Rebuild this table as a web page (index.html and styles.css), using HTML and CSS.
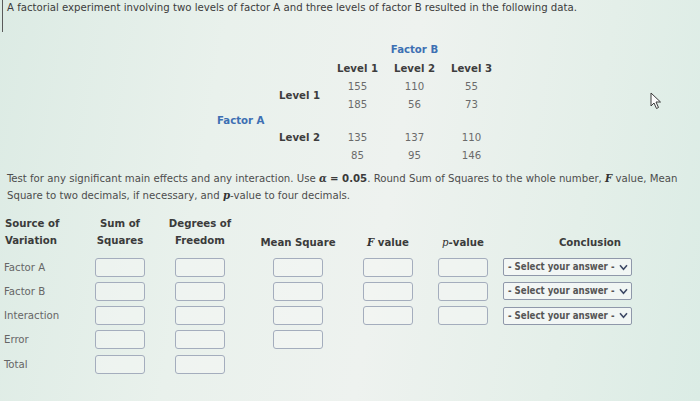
FILE: index.html
```html
<!DOCTYPE html>
<html>
<head>
<meta charset="utf-8">
<link rel="stylesheet" href="styles.css">
</head>
<body>
<div class="page">
  <div class="intro">A factorial experiment involving two levels of factor A and three levels of factor B resulted in the following data.</div>

  <div class="data">
    <div class="fb c-vals">Factor B</div>
    <div class="lvh c1">Level 1</div>
    <div class="lvh c2">Level 2</div>
    <div class="lvh c3">Level 3</div>

    <div class="lvl r-l1">Level 1</div>
    <div class="v c1 r3">155</div><div class="v c2 r3">110</div><div class="v c3 r3">55</div>
    <div class="v c1 r4">185</div><div class="v c2 r4">56</div><div class="v c3 r4">73</div>

    <div class="fa">Factor A</div>

    <div class="lvl r-l2">Level 2</div>
    <div class="v c1 r6">135</div><div class="v c2 r6">137</div><div class="v c3 r6">110</div>
    <div class="v c1 r7">85</div><div class="v c2 r7">95</div><div class="v c3 r7">146</div>
  </div>

  <p class="instr">Test for any significant main effects and any interaction. Use <b class="alpha">α</b> <b>= 0.05</b>. Round Sum of Squares to the whole number, <i class="mv">F</i> value, Mean Square to two decimals, if necessary, and <i class="mv">p</i>-value to four decimals.</p>

  <div class="anova">
    <div class="h h2 h-src">Source of<br>Variation</div>
    <div class="h h2">Sum of<br>Squares</div>
    <div class="h h2">Degrees of<br>Freedom</div>
    <div class="h">Mean Square</div>
    <div class="h"><i class="mv">F</i> value</div>
    <div class="h"><i class="mv pv">p</i>-value</div>
    <div class="h h-con">Conclusion</div>

    <div class="lab">Factor A</div>
    <div class="box"></div><div class="box"></div><div class="box"></div><div class="box"></div><div class="box"></div>
    <div class="sel"><span>- Select your answer -</span><svg viewBox="0 0 10 8" class="chev"><path d="M1 1.5 L5 6 L9 1.5" fill="none" stroke="#3e4a66" stroke-width="1.8"/></svg></div>

    <div class="lab">Factor B</div>
    <div class="box"></div><div class="box"></div><div class="box"></div><div class="box"></div><div class="box"></div>
    <div class="sel"><span>- Select your answer -</span><svg viewBox="0 0 10 8" class="chev"><path d="M1 1.5 L5 6 L9 1.5" fill="none" stroke="#3e4a66" stroke-width="1.8"/></svg></div>

    <div class="lab">Interaction</div>
    <div class="box"></div><div class="box"></div><div class="box"></div><div class="box"></div><div class="box"></div>
    <div class="sel"><span>- Select your answer -</span><svg viewBox="0 0 10 8" class="chev"><path d="M1 1.5 L5 6 L9 1.5" fill="none" stroke="#3e4a66" stroke-width="1.8"/></svg></div>

    <div class="lab">Error</div>
    <div class="box"></div><div class="box"></div><div class="box"></div>
    <div class="empty"></div><div class="empty"></div><div class="empty"></div>

    <div class="lab">Total</div>
    <div class="box"></div><div class="box"></div>
    <div class="empty"></div><div class="empty"></div><div class="empty"></div><div class="empty"></div>
  </div>

  <svg class="cursor" viewBox="0 0 12 18" width="12" height="18"><path d="M1 1 L1 14 L4 11 L6.5 16.5 L8.5 15.5 L6 10 L10.5 10 Z" fill="#fbfbfb" stroke="#3a3a3a" stroke-width="1"/></svg>
</div>
</body>
</html>
```

FILE: styles.css
```css
html, body {
  margin: 0;
  padding: 0;
}
body {
  width: 700px;
  height: 401px;
  overflow: hidden;
  font-family: "DejaVu Sans Condensed", "DejaVu Sans", sans-serif;
  font-stretch: condensed;
  font-size: 11.3px;
  color: #474747;
  background: linear-gradient(100deg, #dcebe4 0%, #e9f1ec 30%, #eef2ef 55%, #e4efe9 80%, #dbece5 100%);
}
.page {
  position: relative;
  height: 401px;
}
.intro {
  border-left: 1.5px solid #5a5a5a;
  margin-left: 2px;
  padding: 1px 0 0 4px;
  height: 31px;
  line-height: 13px;
  color: #3c3c3c;
}
.data {
  display: grid;
  grid-template-columns: 214px 52px 63px 57px 57px 57px;
  grid-template-rows: 18px 19px 18px 17px 16px 18px 18px;
  margin-top: 9px;
  line-height: 16px;
  align-items: center;
}
.fb {
  grid-row: 1;
  grid-column: 4 / 7;
  text-align: center;
  color: #3d6fb3;
  font-weight: bold;
}
.lvh {
  grid-row: 2;
  text-align: center;
  font-weight: bold;
  color: #3d3d3d;
}
.c1 { grid-column: 4; }
.c2 { grid-column: 5; }
.c3 { grid-column: 6; }
.r3 { grid-row: 3; }
.r4 { grid-row: 4; }
.r6 { grid-row: 6; }
.r7 { grid-row: 7; }
.v {
  text-align: center;
  color: #6a6a6a;
}
.lvl {
  grid-column: 3;
  text-align: right;
  padding-right: 9px;
  font-weight: bold;
  color: #3d3d3d;
}
.r-l1 { grid-row: 3 / 5; }
.r-l2 { grid-row: 6; }
.fa {
  grid-column: 2;
  grid-row: 5;
  font-weight: bold;
  color: #3d6fb3;
  padding-left: 3px;
}
.instr {
  margin: 5px 0 0 7px;
  line-height: 17px;
  color: #4d4d4d;
  width: 690px;
}
.instr b {
  color: #3a3a3a;
}
.alpha {
  font-family: "DejaVu Serif", serif;
  font-style: italic;
  color: #2d3e6a;
}
.mv {
  font-family: "DejaVu Serif", "Liberation Serif", serif;
  font-weight: bold;
  font-style: italic;
  color: #333;
}
.anova {
  display: grid;
  grid-template-columns: 90px 60px 100px 96px 84px 66px 188px;
  grid-template-rows: 41px repeat(5, 24.25px);
  margin-top: 10px;
  align-items: center;
}
.h {
  align-self: end;
  text-align: center;
  font-weight: bold;
  color: #3b3b3b;
  line-height: 17px;
  margin-bottom: 4px;
}
.h2 {
  margin-bottom: 6px;
}
.h-src {
  text-align: left;
  padding-left: 5px;
}
.pv {
  font-weight: normal;
}
.lab {
  padding-left: 4px;
  color: #666;
}
.box {
  justify-self: center;
  width: 48px;
  height: 17px;
  border: 1.5px solid #a4adbd;
  border-radius: 3px;
  background: rgba(245, 248, 246, 0.5);
}
.sel {
  justify-self: start;
  margin-left: 7px;
  width: 123px;
  height: 16px;
  border: 1px solid #8f98aa;
  border-radius: 2px;
  background: rgba(248, 250, 249, 0.7);
  font-size: 9.6px;
  font-weight: bold;
  color: #555;
  line-height: 16px;
  padding-left: 4px;
  display: flex;
  align-items: center;
  white-space: nowrap;
  overflow: hidden;
}
.chev {
  flex: none;
  width: 9px;
  height: 7px;
  margin-left: auto;
  margin-right: 3px;
}
.cursor {
  position: absolute;
  left: 650px;
  top: 92px;
}
```
